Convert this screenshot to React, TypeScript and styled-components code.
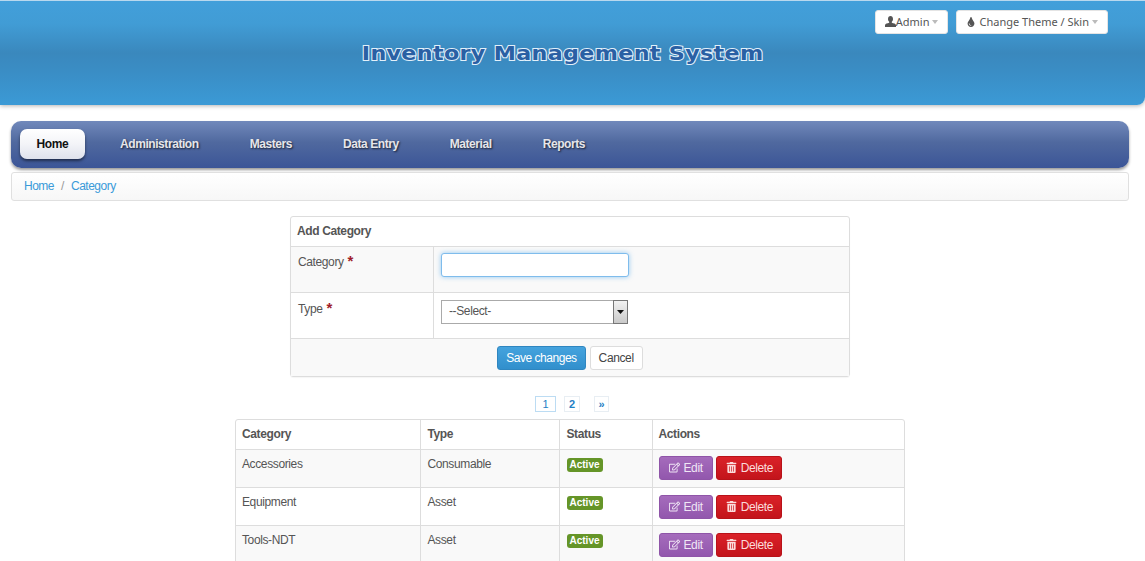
import React from "react"
import styled, { createGlobalStyle } from "styled-components"
import { FaTint, FaRegEdit, FaTrashAlt } from "react-icons/fa"

const GlobalStyle = createGlobalStyle`
  html, body {
    margin: 0;
    padding: 0;
    background: #fff;
    height: 561px;
    overflow: hidden;
    font-family: "Liberation Sans", Arial, sans-serif;
    font-size: 12px;
    letter-spacing: -0.38px;
    color: #555;
  }
  * { box-sizing: border-box; }
`

const navItems = ["Administration", "Masters", "Data Entry", "Material", "Reports"]
const rows = [
  { category: "Accessories", type: "Consumable" },
  { category: "Equipment", type: "Asset" },
  { category: "Tools-NDT", type: "Asset" },
]

const UserIcon = () => (
  <svg width="11" height="11" viewBox="0 0 11 11" fill="currentColor">
    <path d="M5.5 0C7 0 8 1.1 8 2.9 8 4.2 7.4 5.2 6.8 5.7v1.1c1.6.5 4.2 1 4.2 2.4V11H0V9.2c0-1.4 2.6-1.9 4.2-2.4V5.7C3.6 5.2 3 4.2 3 2.9 3 1.1 4 0 5.5 0z" />
  </svg>
)

export default function App() {
  return (
    <>
      <GlobalStyle />
      <Header>
        <HeaderButtons>
          <TopButton $iconGap={0}>
            <UserIcon />
            Admin
            <Caret />
          </TopButton>
          <TopButton $iconGap={3}>
            <FaTint size={10} />
            Change Theme / Skin
            <Caret />
          </TopButton>
        </HeaderButtons>
        <Title>Inventory Management System</Title>
      </Header>

      <Nav>
        <HomeTab>Home</HomeTab>
        {navItems.map((item) => (
          <NavLink key={item}>{item}</NavLink>
        ))}
      </Nav>

      <Breadcrumb>
        <Crumb>Home</Crumb>
        <Slash>/</Slash>
        <Crumb>Category</Crumb>
      </Breadcrumb>

      <FormCard>
        <FormTitle>Add Category</FormTitle>
        <FormRow $shaded>
          <FormLabel>
            Category <Star>*</Star>
          </FormLabel>
          <FormField>
            <TextInput />
          </FormField>
        </FormRow>
        <FormRow>
          <FormLabel $offset={9}>
            Type <Star>*</Star>
          </FormLabel>
          <FormField>
            <FakeSelect>
              --Select-
              <SelectArrow>
                <svg width="7" height="4" viewBox="0 0 7 4">
                  <path d="M0 0h7L3.5 4z" fill="#111" />
                </svg>
              </SelectArrow>
            </FakeSelect>
          </FormField>
        </FormRow>
        <FormFooter>
          <SaveButton>Save changes</SaveButton>
          <CancelButton>Cancel</CancelButton>
        </FormFooter>
      </FormCard>

      <Pagination>
        <PageLink $active>1</PageLink>
        <PageLink $bold>2</PageLink>
        <PageLink $bold $next>»</PageLink>
      </Pagination>

      <TableWrap>
        <DataTable>
          <colgroup>
            <col width="184" />
            <col width="139" />
            <col width="93" />
            <col />
          </colgroup>
          <thead>
            <tr>
              <th>Category</th>
              <th>Type</th>
              <th>Status</th>
              <th>Actions</th>
            </tr>
          </thead>
          <tbody>
            {rows.map((row) => (
              <tr key={row.category}>
                <td>{row.category}</td>
                <td>{row.type}</td>
                <td>
                  <Badge>Active</Badge>
                </td>
                <td>
                  <ActionButton $color="purple">
                    <FaRegEdit size={11} /> Edit
                  </ActionButton>
                  <ActionButton $color="red">
                    <FaTrashAlt size={11} /> Delete
                  </ActionButton>
                </td>
              </tr>
            ))}
          </tbody>
        </DataTable>
      </TableWrap>
    </>
  )
}

const Header = styled.header`
  position: relative;
  height: 105px;
  padding-right: 20px;
  border-top: 1px solid #b9d8ee;
  border-radius: 0 0 8px 0;
  background: linear-gradient(to bottom, #429fda 0%, #419cd5 22%, #3a88bd 50%, #3a8ec6 70%, #3b9ad6 100%);
  box-shadow: 0 1px 4px rgba(0, 0, 0, 0.3);
`

const HeaderButtons = styled.div`
  position: absolute;
  top: 9px;
  right: 37px;
  display: flex;
  gap: 8px;
`

const TopButton = styled.div<{ $iconGap: number }>`
  display: flex;
  align-items: center;
  height: 24px;
  padding: 0 9px 1px;
  background: #fff;
  border: 1px solid #e4e4e4;
  border-radius: 3px;
  font-family: "Noto Sans", sans-serif;
  font-size: 11px;
  letter-spacing: 0;
  color: #555;

  svg {
    margin-right: ${(p) => p.$iconGap}px;
  }
`

const Caret = styled.span`
  width: 0;
  height: 0;
  margin-left: 3px;
  margin-top: 1px;
  border-left: 3.5px solid transparent;
  border-right: 3.5px solid transparent;
  border-top: 4px solid #bbb;
`

const Title = styled.h1`
  width: fit-content;
  margin: 0 auto;
  padding-top: 40px;
  font-family: "DejaVu Sans", sans-serif;
  font-size: 20px;
  line-height: 24px;
  font-weight: 700;
  letter-spacing: 0.3px;
  white-space: nowrap;
  color: #2a60a4;
  -webkit-text-stroke: 2px #e2f0fa;
  paint-order: stroke fill;
  transform: scaleX(1.112);
`

const Nav = styled.nav`
  display: flex;
  align-items: center;
  height: 47px;
  margin: 16px 16px 0 11px;
  padding: 0 0 2px 9px;
  border-radius: 10px;
  background: linear-gradient(to bottom, #7189bb 0%, #50699f 45%, #3b5597 100%);
  box-shadow: 0 2px 3px rgba(0, 0, 0, 0.4);
`

const HomeTab = styled.a`
  display: flex;
  align-items: center;
  justify-content: center;
  width: 65px;
  height: 30px;
  border-radius: 7px;
  background: linear-gradient(to bottom, #ffffff 0%, #f3f4f8 50%, #dfe2ec 100%);
  box-shadow: 0 2px 3px rgba(0, 0, 0, 0.5);
  color: #111;
  font-weight: 700;
  font-size: 12px;
`

const NavLink = styled.a`
  margin-left: 35px;
  margin-right: 16px;
  color: #e6e6ea;
  font-size: 12px;
  font-weight: 700;
  letter-spacing: -0.43px;
  text-shadow: 1px 1px 2px rgba(0, 0, 0, 0.7);
`

const Breadcrumb = styled.div`
  display: flex;
  align-items: center;
  height: 29px;
  margin: 4px 16px 0 11px;
  padding: 0 12px 1px;
  border: 1px solid #e0e0e0;
  border-radius: 3px;
  background: linear-gradient(to bottom, #ffffff, #f7f7f7);
`

const Crumb = styled.a`
  color: #3a9ad9;
  letter-spacing: -0.5px;
`

const Slash = styled.span`
  margin: 0 7px;
  color: #999;
`

const FormCard = styled.section`
  width: 560px;
  margin: 15px 0 0 290px;
  border: 1px solid #ddd;
  border-radius: 3px;
  box-shadow: 0 1px 1px rgba(0, 0, 0, 0.04);
`

const FormTitle = styled.div`
  height: 29px;
  padding: 7px 6px 0;
  font-weight: 700;
  color: #555;
`

const FormRow = styled.div<{ $shaded?: boolean }>`
  display: flex;
  height: 46px;
  border-top: 1px solid #ddd;
  background: ${(p) => (p.$shaded ? "#f9f9f9" : "#fff")};
`

const FormLabel = styled.div<{ $offset?: number }>`
  width: 143px;
  padding: ${(p) => p.$offset ?? 8}px 6px 0 7px;
  border-right: 1px solid #ddd;
`

const Star = styled.span`
  color: #a01c2c;
  font-size: 15px;
  font-weight: 700;
  line-height: 10px;
  margin-left: 1px;
`

const FormField = styled.div`
  padding: 6px 0 0 7px;
`

const TextInput = styled.input`
  display: block;
  width: 188px;
  height: 24px;
  border: 1px solid #7fbcec;
  border-radius: 3px;
  background: #fff;
  outline: none;
  box-shadow: 0 0 5px rgba(82, 168, 236, 0.6);
`

const FakeSelect = styled.div`
  position: relative;
  width: 187px;
  height: 24px;
  margin-top: 1px;
  padding-left: 7px;
  line-height: 21px;
  border: 1px solid #aaa;
  background: #fff;
  color: #555;
`

const SelectArrow = styled.span`
  position: absolute;
  top: -1px;
  right: -1px;
  display: flex;
  align-items: center;
  justify-content: center;
  width: 15px;
  height: 24px;
  border: 1px solid #777;
  background: linear-gradient(to bottom, #f2f2f2, #c9c9c9);
`

const FormFooter = styled.div`
  display: flex;
  justify-content: center;
  gap: 4px;
  height: 38px;
  padding: 7px 0 0 0;
  border-top: 1px solid #ddd;
  background: #f9f9f9;
`

const SaveButton = styled.a`
  display: flex;
  align-items: center;
  height: 24px;
  padding: 0 8px;
  border: 1px solid #2f86c0;
  border-radius: 3px;
  background: linear-gradient(to bottom, #45a3de, #318fcc);
  color: #fff;
  letter-spacing: -0.48px;
`

const CancelButton = styled.a`
  display: flex;
  align-items: center;
  height: 24px;
  padding: 0 8px;
  border: 1px solid #ddd;
  border-radius: 3px;
  background: #fff;
  color: #444;
`

const Pagination = styled.div`
  display: flex;
  height: 16px;
  margin: 19px 0 0 535px;
`

const PageLink = styled.a<{ $active?: boolean; $bold?: boolean; $next?: boolean }>`
  display: flex;
  align-items: center;
  justify-content: center;
  width: ${(p) => (p.$active ? 21 : p.$next ? 15 : 16)}px;
  margin-right: ${(p) => (p.$active ? 8 : 14)}px;
  border: 1px solid ${(p) => (p.$active ? "#bcdcf3" : "#e8eef3")};
  color: #1f7fc4;
  font-size: 11px;
  letter-spacing: 0;
  font-weight: ${(p) => (p.$bold ? 700 : 400)};
`

const TableWrap = styled.div`
  width: 670px;
  margin: 7px 0 0 235px;
  border: 1px solid #ddd;
  border-radius: 3px;
`

const DataTable = styled.table`
  width: 100%;
  table-layout: fixed;
  border-collapse: collapse;
  color: #555;

  th {
    height: 29px;
    padding: 0 6px;
    text-align: left;
    font-weight: 700;
  }

  td {
    height: 38px;
    padding: 7px 6px 0;
    vertical-align: top;
    border-top: 1px solid #ddd;
  }

  th + th,
  td + td {
    padding-left: 7px;
    border-left: 1px solid #ddd;
  }

  th:last-child,
  td:last-child {
    padding-left: 6px;
  }

  td:last-child {
    padding-top: 6px;
  }

  tbody tr + tr td:last-child {
    padding-top: 7px;
  }

  tbody tr:nth-child(odd) td {
    background: #f9f9f9;
  }
`

const Badge = styled.span`
  display: inline-block;
  padding: 0 3px;
  height: 14px;
  line-height: 13px;
  border-radius: 3px;
  background: #659528;
  color: #fff;
  font-size: 10px;
  letter-spacing: 0;
  font-weight: 700;
  vertical-align: top;
  margin-top: 1px;
`

const ActionButton = styled.a<{ $color: "purple" | "red" }>`
  display: inline-flex;
  align-items: center;
  gap: 4px;
  height: 24px;
  padding: 0 ${(p) => (p.$color === "purple" ? 9 : 8)}px 0 9px;
  margin-right: 3px;
  border-radius: 3px;
  color: ${(p) => (p.$color === "purple" ? "#f0e6f5" : "#fbdcdc")};
  background: ${(p) =>
    p.$color === "purple"
      ? "linear-gradient(to bottom, #a56cbc, #9257ad)"
      : "linear-gradient(to bottom, #da2128, #c3141b)"};
  border: 1px solid ${(p) => (p.$color === "purple" ? "#8f55a8" : "#b81219")};
`
